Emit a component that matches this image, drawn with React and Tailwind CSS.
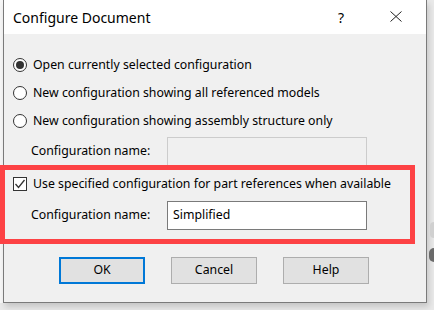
import React from "react";

const font = { fontFamily: '"Noto Sans", "Open Sans", sans-serif' };

function Radio({ checked, label }) {
  return (
    <div className="flex items-center h-[28px] pl-[9px]">
      <div className="w-[14px] h-[14px] rounded-full border border-[#333] bg-white flex items-center justify-center">
        {checked && <div className="w-[8px] h-[8px] rounded-full bg-[#333]" />}
      </div>
      <span className="ml-[6px] text-[12.3px] text-black">{label}</span>
    </div>
  );
}

function Btn({ children, focused }) {
  return (
    <div
      className={
        "w-[86px] h-[27px] flex items-center justify-center bg-[#e1e1e1] text-[12.3px] text-black " +
        (focused ? "border-2 border-[#0078d7]" : "border border-[#adadad]")
      }
    >
      {children}
    </div>
  );
}

export default function App() {
  return (
    <div className="w-[434px] h-[310px] bg-[#e9e9e9] flex relative overflow-hidden" style={font}>
      <div className="w-[3px] h-[303px] bg-[#f7f7f7]" />
      <div className="w-[424px] h-[303px] border border-t-0 border-[#7a7a7a] flex flex-col bg-[#f0f0f0] shadow-[2px_4px_6px_rgba(0,0,0,0.15)]">
        <div className="h-[34px] bg-white flex items-center pl-[9px] relative">
          <span className="text-[14px] text-black">Configure Document</span>
          <span className="absolute left-[334px] top-[7px] text-[14px] text-black">?</span>
          <svg className="absolute left-[386px] top-[11px]" width="12" height="11" viewBox="0 0 12 11">
            <path d="M0.5 0.5 L11.5 10.5 M11.5 0.5 L0.5 10.5" stroke="#222" strokeWidth="1" />
          </svg>
        </div>
        <div className="flex flex-col pt-[17px]">
          <Radio checked label="Open currently selected configuration" />
          <Radio label="New configuration showing all referenced models" />
          <Radio label="New configuration showing assembly structure only" />
          <div className="flex items-center mt-[2px] h-[29px]">
            <span className="pl-[27px] w-[163px] text-[12.3px] text-black">Configuration name:</span>
            <div className="w-[200px] h-[29px] border border-[#cccccc] bg-[#f0f0f0]" />
          </div>
          <div className="flex items-center mt-[8px] h-[20px] pl-[9px]">
            <div className="w-[14px] h-[14px] border border-[#333] bg-white flex items-center justify-center">
              <svg width="12" height="12" viewBox="0 0 12 12">
                <path d="M1.5 6 L4.5 9.5 L10.5 2" stroke="#333" strokeWidth="1.3" fill="none" />
              </svg>
            </div>
            <span className="ml-[6px] text-[12.3px] text-black">Use specified configuration for part references when available</span>
          </div>
          <div className="flex items-center mt-[7px] h-[29px]">
            <span className="pl-[27px] w-[163px] text-[12.3px] text-black">Configuration name:</span>
            <div className="w-[200px] h-[29px] border border-[#7a7a7a] bg-white flex items-center pl-[5px] text-[12.3px] text-black">
              Simplified
            </div>
          </div>
          <div className="flex mt-[27px] pl-[55px] gap-[26px]">
            <Btn focused>OK</Btn>
            <Btn>Cancel</Btn>
            <Btn>Help</Btn>
          </div>
        </div>
      </div>
      <div className="flex-1 flex flex-col items-end pt-[222px]">
        <div className="w-[4px] h-[16px] rounded-l-full bg-[#d0d0d0]" />
        <div className="w-[5px] h-[14px] mt-[10px] rounded-l-full bg-[#6a6a6a]" />
      </div>
      <div className="absolute left-0 top-[165px] w-[415px] h-[79px] border-[5px] border-[#fd4245]" />
    </div>
  );
}
